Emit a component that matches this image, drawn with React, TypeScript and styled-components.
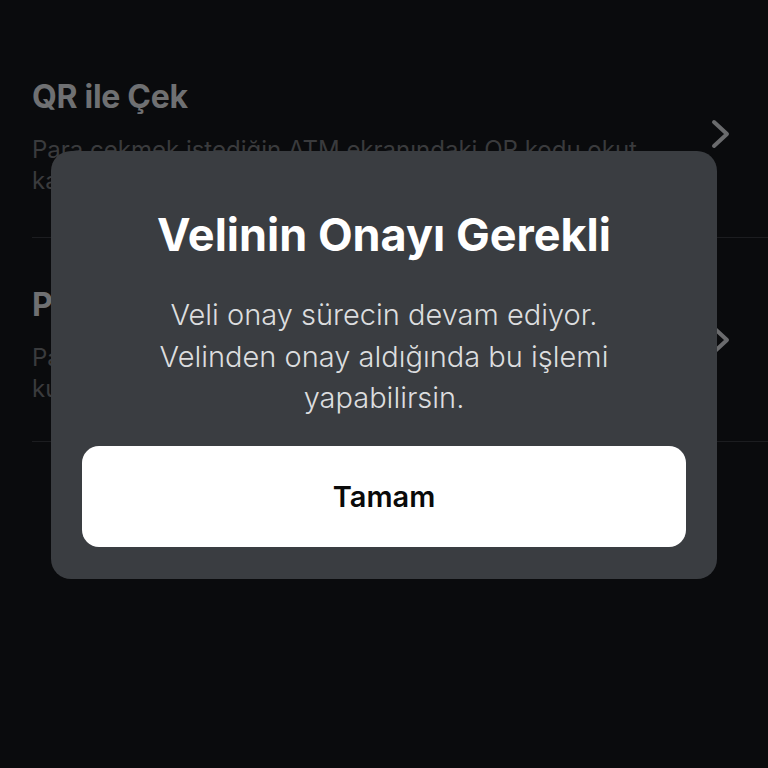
import styled, { createGlobalStyle } from 'styled-components';

const GlobalStyle = createGlobalStyle`
	html, body {
		margin: 0;
		padding: 0;
		background: #0a0b0d;
	}
	body {
		font-family: 'Inter', 'Noto Sans', sans-serif;
	}
`;

const Screen = styled.div`
	width: 768px;
	height: 768px;
	overflow: hidden;
	background: #0a0b0d;
	padding-top: 30px;
	box-sizing: border-box;
`;

const List = styled.div`
	display: flex;
	flex-direction: column;
	padding: 0 0 0 32px;
`;

const Item = styled.div<{ $height: number }>`
	display: flex;
	align-items: center;
	gap: 28px;
	height: ${(p) => p.$height}px;
	padding-right: 36px;
	border-bottom: 1px solid #1c1d20;
	box-sizing: border-box;
`;

const ItemText = styled.div`
	flex: 1;
	align-self: flex-start;
	display: flex;
	flex-direction: column;
	gap: 18px;
	padding-top: 48px;
`;

const ItemTitle = styled.div`
	font-size: 32px;
	font-weight: 700;
	letter-spacing: -0.3px;
	color: #6f7072;
	line-height: 38px;
`;

const ItemDesc = styled.div`
	font-size: 24px;
	font-weight: 400;
	color: #3a3b3d;
	line-height: 31px;
`;

const Chevron = styled.svg`
	width: 22px;
	height: 30px;
	flex-shrink: 0;
`;

const Dialog = styled.div`
	position: fixed;
	top: 151px;
	left: 51px;
	width: 666px;
	box-sizing: border-box;
	background: #3a3d41;
	border-radius: 20px;
	padding: 60px 31px 32px;
	display: flex;
	flex-direction: column;
	align-items: center;
`;

const DialogTitle = styled.h2`
	margin: 0;
	font-family: 'Inter', sans-serif;
	font-size: 45px;
	font-weight: 700;
	line-height: 48px;
	color: #ffffff;
	text-align: center;
`;

const DialogBody = styled.p`
	margin: 35px 0 0;
	font-size: 29px;
	font-weight: 300;
	line-height: 41.5px;
	color: #dcdddf;
	text-align: center;
	max-width: 490px;
`;

const OkButton = styled.button`
	margin-top: 27px;
	width: 100%;
	height: 101px;
	border: none;
	border-radius: 17px;
	background: #ffffff;
	color: #0a0a0a;
	font-family: 'Inter', sans-serif;
	font-size: 29px;
	font-weight: 600;
	cursor: pointer;
`;

const items = [
	{
		title: 'QR ile Çek',
		desc: 'Para çekmek istediğin ATM ekranındaki QR kodu okut, kameranı kullanarak işlemini tamamla.',
		height: 208,
	},
	{
		title: 'Para Çekme Kodu ile Çek',
		desc: 'Para çekmek için oluşturacağın kodu ATM ekranında kullanarak işlemini tamamla.',
		height: 204,
	},
];

function ChevronIcon() {
	return (
		<Chevron viewBox="0 0 22 30" fill="none">
			<path
				d="M4 3 L17 15 L4 27"
				stroke="#6a6b6d"
				strokeWidth="4"
				strokeLinecap="round"
				strokeLinejoin="round"
			/>
		</Chevron>
	);
}

export default function App() {
	return (
		<>
			<GlobalStyle />
			<Screen>
				<List>
					{items.map((item) => (
						<Item key={item.title} $height={item.height}>
							<ItemText>
								<ItemTitle>{item.title}</ItemTitle>
								<ItemDesc>{item.desc}</ItemDesc>
							</ItemText>
							<ChevronIcon />
						</Item>
					))}
				</List>
			</Screen>
			<Dialog>
				<DialogTitle>Velinin Onayı Gerekli</DialogTitle>
				<DialogBody>
					Veli onay sürecin devam ediyor. Velinden onay aldığında bu işlemi
					yapabilirsin.
				</DialogBody>
				<OkButton>Tamam</OkButton>
			</Dialog>
		</>
	);
}
